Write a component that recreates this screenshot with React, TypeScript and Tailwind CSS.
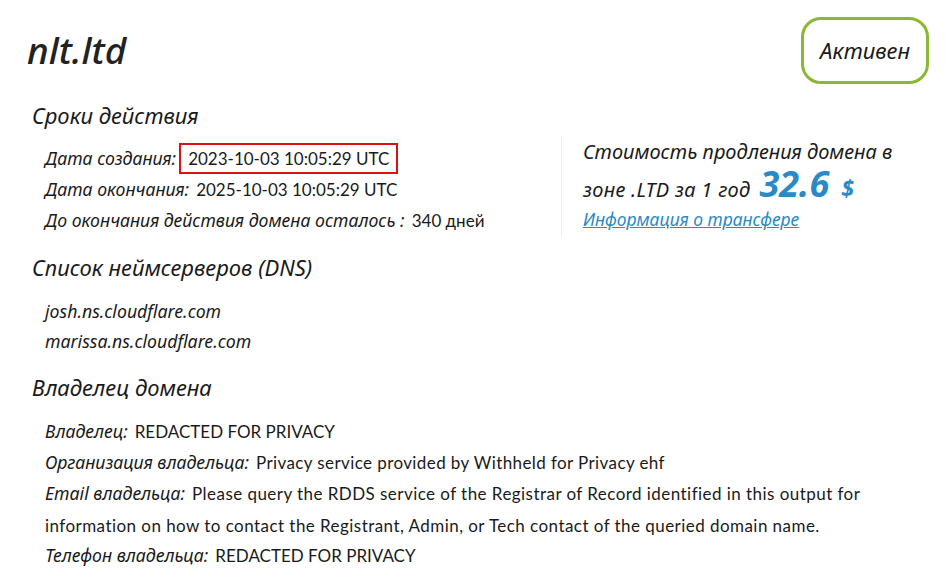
import React from "react";

const italic = { fontFamily: '"Noto Sans", "Open Sans", sans-serif' };
const plain = { fontFamily: 'Lato, "Noto Sans", sans-serif' };

function Row({ label, value, boxed, wide }: { label: string; value: string; boxed?: boolean; wide?: boolean }) {
  return (
    <div className="flex items-center h-[31px] text-[#1a1a1a]">
      <span className="italic text-[17.7px]" style={italic}>{label}</span>
      {boxed ? (
        <span className="ml-[3px] border-2 border-[#e01010] px-[7px] h-[31px] flex items-center text-[17px]" style={plain}>
          {value}
        </span>
      ) : (
        <span className={wide ? "ml-[7px] text-[17px] tracking-[0.4px]" : "ml-[7px] text-[17px]"} style={plain}>
          {value}
        </span>
      )}
    </div>
  );
}

export default function App() {
  return (
    <div className="w-[947px] h-[581px] bg-white overflow-hidden pl-[27px] pr-[18px] text-[#1a1a1a]">
      <div className="flex justify-between items-start pt-[17px]">
        <h1 className="italic font-medium text-[37px] leading-none mt-[14px] text-[#222]" style={italic}>
          nlt.ltd
        </h1>
        <div
          className="w-[128px] h-[67px] border-[3px] border-[#8ab833] rounded-[20px] flex items-center justify-center italic text-[22px]"
          style={italic}
        >
          Активен
        </div>
      </div>

      <div className="pl-[5px]">
        <h2 className="italic text-[22px] leading-none mt-[20px]" style={italic}>Сроки действия</h2>
        <div className="flex mt-[17px]">
          <div className="pl-[13px] w-[529px]">
            <Row label="Дата создания:" value="2023-10-03 10:05:29 UTC" boxed />
            <Row label="Дата окончания:" value="2025-10-03 10:05:29 UTC" />
            <Row label="До окончания действия домена осталось :" value="340 дней" />
          </div>
          <div className="border-l border-[#ececec] pl-[21px] h-[100px] -mt-[7px]">
            <div className="italic text-[20px] leading-[32px] h-[32px]" style={italic}>
              Стоимость продления домена в
            </div>
            <div className="italic text-[20px] leading-[31px] h-[31px] flex items-baseline" style={italic}>
              <span className="tracking-[0.3px]">зоне .LTD за 1 год</span>
              <span className="ml-[9px] text-[36px] leading-[31px] font-bold text-[#2a8ac8]">32.6</span>
              <span className="ml-[12px] text-[23px] leading-[31px] font-bold text-[#2a8ac8]">$</span>
            </div>
            <div className="mt-[5px] leading-[31px]">
              <a className="italic text-[17.5px] underline text-[#2a8ac8]" style={italic} href="#">
                Информация о трансфере
              </a>
            </div>
          </div>
        </div>

        <h2 className="italic text-[22px] leading-none mt-[20px]" style={italic}>Список неймсерверов (DNS)</h2>
        <div className="pl-[13px] mt-[18px] italic text-[17.7px]" style={italic}>
          <div className="h-[30px] flex items-center">josh.ns.cloudflare.com</div>
          <div className="h-[30px] flex items-center">marissa.ns.cloudflare.com</div>
        </div>

        <h2 className="italic text-[22px] leading-none mt-[20px]" style={italic}>Владелец домена</h2>
        <div className="pl-[13px] mt-[18px]">
          <Row label="Владелец:" value="REDACTED FOR PRIVACY" />
          <Row label="Организация владельца:" value="Privacy service provided by Withheld for Privacy ehf" wide />
          <div className="leading-[31px] h-[62px] w-[860px]">
            <span className="italic text-[17.7px] leading-[31px]" style={italic}>Email владельца:</span>
            <span className="ml-[7px] text-[17px] leading-[31px] tracking-[0.45px]" style={plain}>
              Please query the RDDS service of the Registrar of Record identified in this output for information on how to contact the Registrant, Admin, or Tech contact of the queried domain name.
            </span>
          </div>
          <Row label="Телефон владельца:" value="REDACTED FOR PRIVACY" />
        </div>
      </div>
    </div>
  );
}
